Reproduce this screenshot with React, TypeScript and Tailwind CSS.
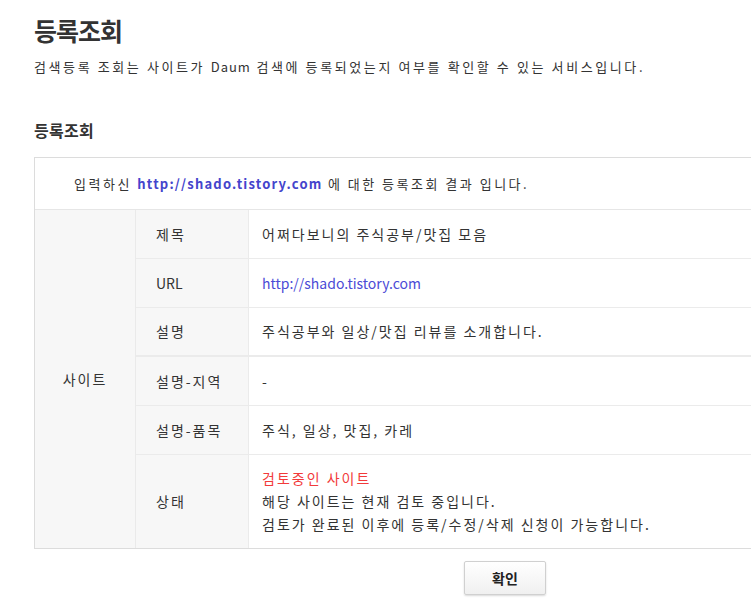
import React from "react";

const rows = [
  { label: "제목", value: <span>어쩌다보니의 주식공부/맛집 모음</span> },
  {
    label: "URL",
    value: <span className="text-[#4b4bd6] tracking-normal">http://shado.tistory.com</span>,
  },
  { label: "설명", value: <span>주식공부와 일상/맛집 리뷰를 소개합니다.</span>, thick: true },
  { label: "설명-지역", value: <span>-</span> },
  { label: "설명-품목", value: <span>주식, 일상, 맛집, 카레</span> },
];

export default function App() {
  return (
    <div
      className="w-[751px] h-[610px] overflow-hidden bg-white text-[#333]"
      style={{ fontFamily: '"Noto Sans CJK KR", "Noto Sans", sans-serif' }}
    >
      <div className="pl-[34px] w-[980px]">
        <h1 className="pt-[13px] text-[25px] font-bold leading-[34px] text-[#333] tracking-[-1px]">
          등록조회
        </h1>
        <p className="mt-[10px] text-[13px] leading-[20px] text-[#333] tracking-[2.6px]">
          검색등록 조회는 사이트가 <span className="tracking-[1px]">Daum</span> 검색에 등록되었는지 여부를 확인할 수 있는 서비스입니다.
        </p>

        <h2 className="mt-[41px] text-[16px] font-bold leading-[24px] text-[#333] tracking-[0.3px]">
          등록조회
        </h2>

        <div className="mt-[15px] w-[942px] border-t border-l border-b border-[#dcdcdc]">
          <div className="h-[52px] flex items-center pl-[39px] text-[13px] tracking-[2.5px] border-b border-[#e6e6e6]">
            입력하신&nbsp;
            <span className="font-bold text-[#4444cc] tracking-[1.2px]">http://shado.tistory.com</span>
            &nbsp;에 대한 등록조회 결과 입니다.
          </div>
          <div className="flex">
            <div className="w-[101px] bg-[#f7f7f7] border-r border-[#eaeaea] flex items-center justify-center text-[14px] tracking-[2px]">
              사이트
            </div>
            <div className="flex-1 flex flex-col text-[14px] tracking-[2px]">
              {rows.map((r) => (
                <div
                  key={r.label}
                  className={
                    "flex h-[49px] " +
                    (r.thick ? "border-b-2 border-[#ebebeb]" : "border-b border-[#ebebeb]")
                  }
                >
                  <div
                    className={
                      "w-[113px] bg-[#f7f7f7] border-r border-[#ebebeb] flex items-center pl-[20px] " +
                      (r.label === "URL" ? "tracking-normal" : "")
                    }
                  >
                    {r.label}
                  </div>
                  <div className="flex-1 flex items-center pl-[13px]">{r.value}</div>
                </div>
              ))}
              <div className="flex h-[93px]">
                <div className="w-[113px] bg-[#f7f7f7] border-r border-[#ebebeb] flex items-center pl-[20px]">
                  상태
                </div>
                <div className="flex-1 flex flex-col justify-center pl-[13px] leading-[23px]">
                  <span className="text-[#f23a3a]">검토중인 사이트</span>
                  <span>해당 사이트는 현재 검토 중입니다.</span>
                  <span>검토가 완료된 이후에 등록/수정/삭제 신청이 가능합니다.</span>
                </div>
              </div>
            </div>
          </div>
        </div>

        <div className="w-[942px] flex justify-center mt-[12px]">
          <button className="w-[82px] h-[34px] border border-[#d0d0d0] rounded-[2px] bg-gradient-to-b from-white to-[#f0f0f0] shadow-[0_1px_2px_rgba(0,0,0,0.15)] text-[14px] font-bold text-[#222]">
            확인
          </button>
        </div>
      </div>
    </div>
  );
}
